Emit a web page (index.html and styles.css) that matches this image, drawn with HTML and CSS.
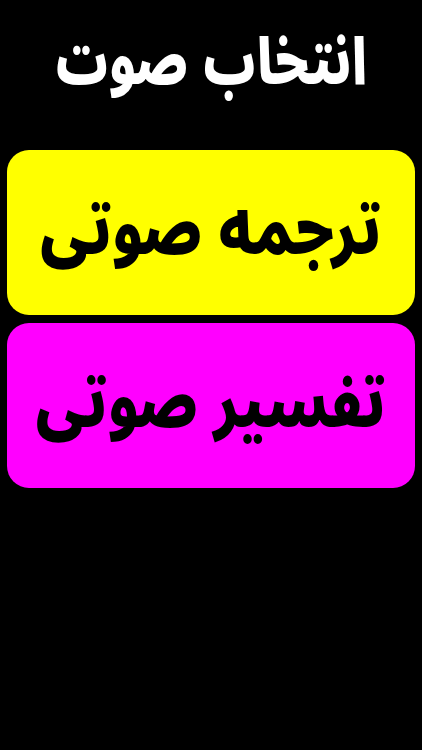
FILE: index.html
```html
<!DOCTYPE html>
<html lang="fa" dir="rtl">
<head>
<meta charset="utf-8">
<link rel="stylesheet" href="styles.css">
</head>
<body>
<main class="screen">
  <h1 class="title"><span class="title-text">انتخاب صوت</span></h1>
  <div class="choices">
    <button class="choice choice-yellow"><span class="label">ترجمه صوتی</span></button>
    <button class="choice choice-magenta"><span class="label">تفسیر صوتی</span></button>
  </div>
</main>
</body>
</html>
```
FILE: styles.css
```css
html, body {
  margin: 0;
  padding: 0;
  background: #000;
}
.screen {
  width: 422px;
  height: 750px;
  background: #000;
  display: flex;
  flex-direction: column;
  padding: 0 7px;
  box-sizing: border-box;
  font-family: "Noto Sans Arabic", "DejaVu Sans", sans-serif;
}
.title {
  margin: 0;
  height: 150px;
  display: flex;
  align-items: center;
  justify-content: center;
  padding-bottom: 22px;
  box-sizing: border-box;
  color: #fff;
  font-size: 51px;
  font-weight: 900;
  white-space: nowrap;
}
.title-text {
  display: inline-block;
  line-height: 2;
  transform: scaleY(1.25);
}
.choices {
  display: flex;
  flex-direction: column;
  gap: 8px;
}
.choice {
  height: 165px;
  border: none;
  border-radius: 22px;
  display: flex;
  align-items: center;
  justify-content: center;
  font-family: "Noto Sans Arabic", "DejaVu Sans", sans-serif;
  font-size: 58px;
  font-weight: 900;
  white-space: nowrap;
  color: #000;
  padding: 0;
}
.label {
  display: inline-block;
  line-height: 2;
  transform: scaleY(1.18);
}
.choice-yellow { background: #ffff00; }
.choice-magenta { background: #ff00ff; }
```
